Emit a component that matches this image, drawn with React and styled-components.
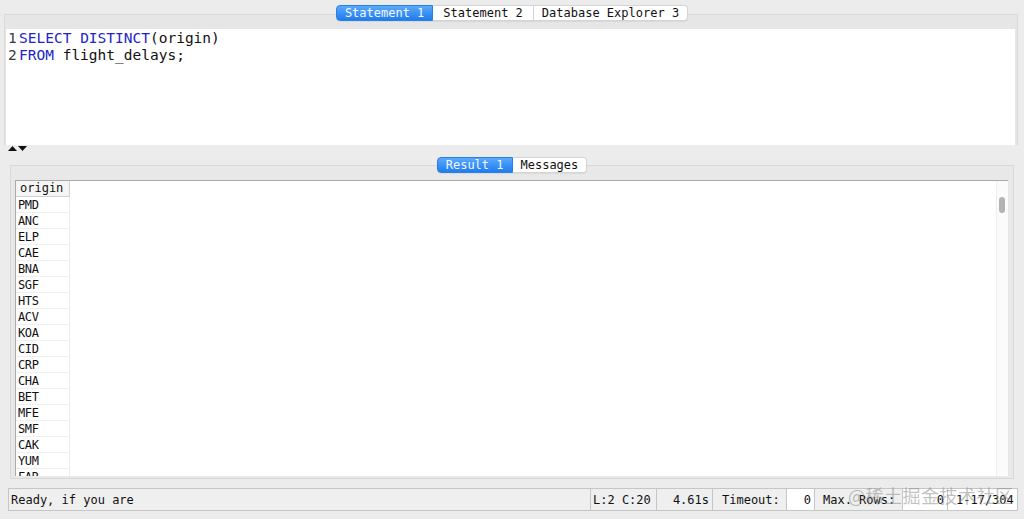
import React from 'react';
import styled, { createGlobalStyle } from 'styled-components';

const GlobalStyle = createGlobalStyle`
  html, body {
    margin: 0;
    padding: 0;
    background: #ececec;
  }
  body {
    font-family: "DejaVu Sans Mono", "Liberation Mono", monospace;
    font-size: 12px;
    color: #111;
  }
`;

const MONO = `"DejaVu Sans Mono", "Liberation Mono", monospace`;

const origins = [
  'PMD', 'ANC', 'ELP', 'CAE', 'BNA', 'SGF', 'HTS', 'ACV', 'KOA',
  'CID', 'CRP', 'CHA', 'BET', 'MFE', 'SMF', 'CAK', 'YUM', 'FAR',
];

const Window = styled.div`
  position: relative;
  width: 1024px;
  height: 519px;
  display: flex;
  flex-direction: column;
  overflow: hidden;
  background: #ececec;
`;

const TabStrip = styled.div`
  position: relative;
  z-index: 2;
  display: flex;
  justify-content: center;
  height: 16px;
  margin-top: ${props => props.top}px;
`;

const Tab = styled.div`
  height: 16px;
  box-sizing: border-box;
  padding: 0 ${props => props.pad || 8}px;
  display: flex;
  align-items: center;
  font-family: ${MONO};
  font-size: 12px;
  line-height: 16px;
  white-space: nowrap;
  color: ${props => props.active ? '#f4f8ff' : '#111'};
  background: ${props => props.active
    ? 'linear-gradient(#5aa9fb, #1f7cf0)'
    : '#ffffff'};
  border: 1px solid ${props => props.active ? '#2a7fe6' : '#d4d4d4'};
  border-left-width: ${props => props.first ? 1 : 0}px;
  border-radius: ${props => props.first ? '4px 0 0 4px' : props.last ? '0 4px 4px 0' : '0'};
  box-shadow: 0 1px 1px rgba(0, 0, 0, 0.06);
`;

const EditorPane = styled.div`
  margin: -7px 6px 0 4px;
  height: 131px;
  box-sizing: border-box;
  border: 1px solid #dadada;
  border-bottom: none;
  background: #e6e6e6;
  padding: 14px 2px 0 1px;
  display: flex;
`;

const Editor = styled.div`
  flex: 1;
  background: #ffffff;
  display: flex;
  font-family: ${MONO};
  font-size: 14.5px;
  line-height: 17px;
  padding-top: 1px;
`;

const Gutter = styled.div`
  width: 13px;
  padding-left: 2px;
  box-sizing: border-box;
  color: #3a3a3a;
`;

const Code = styled.div`
  color: #111;
  white-space: pre;
`;

const Keyword = styled.span`
  color: #2424c6;
`;

const Splitter = styled.div`
  height: 11px;
  display: flex;
  align-items: flex-start;
  padding: 1px 0 0 8px;
`;

const ResultPane = styled.div`
  margin: -8px 10px 0 10px;
  height: 314px;
  box-sizing: border-box;
  border: 1px solid #d8d8d8;
  background: #e8e8e8;
  padding: 14px 5px 2px 4px;
  display: flex;
`;

const TableArea = styled.div`
  position: relative;
  flex: 1;
  background: #ffffff;
  border-top: 1px solid #a9a9a9;
  border-left: 1px solid #a9a9a9;
  overflow: hidden;
`;

const Column = styled.div`
  width: 54px;
  display: flex;
  flex-direction: column;
`;

const HeaderCell = styled.div`
  height: 16px;
  box-sizing: border-box;
  padding-left: 4px;
  background: #f5f5f5;
  border-right: 1px solid #d0d0d0;
  border-bottom: 1px solid #d0d0d0;
  font-family: ${MONO};
  font-size: 12px;
  line-height: 15px;
`;

const Cell = styled.div`
  height: 16px;
  flex: none;
  box-sizing: border-box;
  padding-left: 2px;
  border-right: 1px solid #ececec;
  border-bottom: 1px solid #efefef;
  font-family: ${MONO};
  font-size: 12px;
  line-height: 16px;
  letter-spacing: -0.4px;
`;

const ScrollTrack = styled.div`
  position: absolute;
  top: 0;
  right: 0;
  bottom: 0;
  width: 11px;
  border-left: 1px solid #eeeeee;
  background: #fbfbfb;
`;

const ScrollThumb = styled.div`
  position: absolute;
  top: 16px;
  left: 2px;
  width: 6px;
  height: 16px;
  border-radius: 3px;
  background: #b3b3b3;
`;

const StatusBar = styled.div`
  display: flex;
  height: 23px;
  margin: 9px 6px 0 8px;
  font-family: ${MONO};
  font-size: 12px;
`;

const Field = styled.div`
  width: ${props => props.w ? `${props.w}px` : 'auto'};
  flex: ${props => props.w ? 'none' : '1'};
  box-sizing: border-box;
  display: flex;
  align-items: center;
  justify-content: ${props => props.right ? 'flex-end' : 'flex-start'};
  padding: 0 ${props => props.right ? 3 : 0}px 0 ${props => props.pl || 2}px;
  background: ${props => props.white ? '#ffffff' : '#efefef'};
  border: 1px solid #c6c6c6;
  border-left-width: ${props => props.first ? 1 : 0}px;
  white-space: nowrap;
  overflow: hidden;
`;

const Watermark = styled.div`
  position: absolute;
  left: 848px;
  top: 482px;
  font-family: "Noto Sans CJK SC", sans-serif;
  font-size: 18px;
  letter-spacing: 0.5px;
  color: rgba(140, 140, 140, 0.55);
  pointer-events: none;
`;

const Arrows = () => (
  <svg width="20" height="6" viewBox="0 0 20 6">
    <path d="M0 5 L4.5 0 L9 5 Z" fill="#111" />
    <path d="M10 0 L19 0 L14.5 5 Z" fill="#111" />
  </svg>
);

const App = () => {
  // render
  return (
    <Window>
      <GlobalStyle />
      <TabStrip top={5}>
        <Tab active first>Statement 1</Tab>
        <Tab pad={10}>Statement 2</Tab>
        <Tab last>Database Explorer 3</Tab>
      </TabStrip>
      <EditorPane>
        <Editor>
          <Gutter>
            <div>1</div>
            <div>2</div>
          </Gutter>
          <Code>
            <div><Keyword>SELECT</Keyword> <Keyword>DISTINCT</Keyword>(origin)</div>
            <div><Keyword>FROM</Keyword> flight_delays;</div>
          </Code>
        </Editor>
      </EditorPane>
      <Splitter>
        <Arrows />
      </Splitter>
      <TabStrip top={0}>
        <Tab active first>Result 1</Tab>
        <Tab last>Messages</Tab>
      </TabStrip>
      <ResultPane>
        <TableArea>
          <Column>
            <HeaderCell>origin</HeaderCell>
            {
              origins.map(code => <Cell key={code}>{code}</Cell>)
            }
          </Column>
          <ScrollTrack>
            <ScrollThumb />
          </ScrollTrack>
        </TableArea>
      </ResultPane>
      <StatusBar>
        <Field first>Ready, if you are</Field>
        <Field w={66} pl={2}>L:2 C:20</Field>
        <Field w={56} right>4.61s</Field>
        <Field w={74} pl={9}>Timeout:</Field>
        <Field w={28} right white>0</Field>
        <Field w={88} pl={8}>Max. Rows:</Field>
        <Field w={45} right white>0</Field>
        <Field w={70} white pl={8}>1-17/304</Field>
      </StatusBar>
      <Watermark>@稀土掘金技术社区</Watermark>
    </Window>
  );
};

export default App;
